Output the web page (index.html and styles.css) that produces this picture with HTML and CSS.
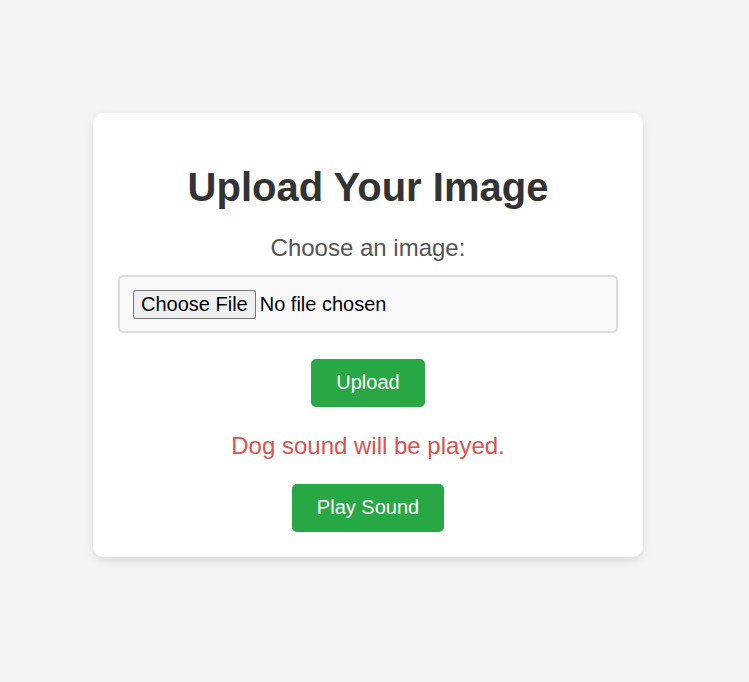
FILE: index.html
```html
<!DOCTYPE html>
<html lang="en">
<head>
<meta charset="utf-8">
<title>Upload Your Image</title>
<link rel="stylesheet" href="styles.css">
</head>
<body>
<div class="card">
  <h1 class="title">Upload Your Image</h1>
  <label class="label" for="file">Choose an image:</label>
  <div class="file-box">
    <input class="file-input" id="file" type="file" accept="image/*">
  </div>
  <button class="btn btn-upload" type="button">Upload</button>
  <p class="message">Dog sound will be played.</p>
  <button class="btn" type="button">Play Sound</button>
</div>
</body>
</html>
```

FILE: styles.css
```css
html, body {
  margin: 0;
  padding: 0;
}
body {
  background: #f4f4f4;
  font-family: Arial, "Liberation Sans", sans-serif;
  min-height: 682px;
  padding-top: 113px;
  box-sizing: border-box;
}
.card {
  width: 500px;
  margin-left: 93px;
  padding: 25px;
  background: #fff;
  border-radius: 10px;
  box-shadow: 0 4px 10px rgba(0, 0, 0, 0.1);
  text-align: center;
}
.title {
  font-size: 40px;
  font-weight: bold;
  color: #333;
  margin: 27px 0 24px;
  line-height: normal;
}
.label {
  display: block;
  font-size: 24px;
  color: #555;
  margin-bottom: 13px;
}
.file-box {
  border: 2px solid #ddd;
  background: #f9f9f9;
  border-radius: 5px;
  padding: 13px 13px 12px;
  text-align: left;
}
.file-input {
  font-family: Arial, "Liberation Sans", sans-serif;
  font-size: 20px;
  color: #000;
}
.btn {
  display: inline-block;
  font-family: Arial, "Liberation Sans", sans-serif;
  font-size: 20px;
  line-height: 23px;
  padding: 12px 25px 13px;
  border: none;
  border-radius: 5px;
  background: #28a745;
  color: #fff;
  cursor: pointer;
}
.btn-upload {
  margin-top: 26px;
}
.message {
  font-size: 24px;
  color: #d9534f;
  margin: 25px 0 24px;
}
```
